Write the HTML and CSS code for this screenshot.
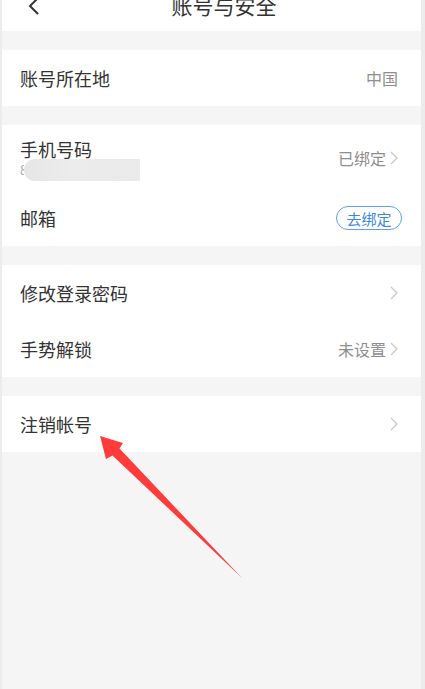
FILE: index.html
```html
<!doctype html>
<html>
	<head>
		<meta charset="utf-8">
		<title>账号与安全</title>
		<link rel="stylesheet" href="styles.css">
	</head>
	<body>
		<div class="page">
			<div class="header">
				<div class="headerInner">
					<a class="back">
						<svg width="14" height="18" viewBox="0 0 14 18"><polyline points="11,1 3,9 11,17" fill="none" stroke="#333" stroke-width="2"/></svg>
					</a>
					<span class="title">账号与安全</span>
					<span></span>
				</div>
			</div>

			<div class="group">
				<div class="row">
					<span class="label">账号所在地</span>
					<span class="value">中国</span>
				</div>
			</div>

			<div class="group">
				<div class="row phoneRow">
					<div class="phoneLeft">
						<span class="label">手机号码</span>
						<div class="phoneNum"><span class="digit">8</span><span class="blur"></span></div>
					</div>
					<span class="value">已绑定<i class="arrow"><svg width="8" height="14" viewBox="0 0 8 14"><polyline points="1,1 7,7 1,13" fill="none" stroke="#c8c8c8" stroke-width="1.3"/></svg></i></span>
				</div>
				<div class="row">
					<span class="label">邮箱</span>
					<a class="bindBtn">去绑定</a>
				</div>
			</div>

			<div class="group">
				<div class="row">
					<span class="label">修改登录密码</span>
					<span class="value"><i class="arrow"><svg width="8" height="14" viewBox="0 0 8 14"><polyline points="1,1 7,7 1,13" fill="none" stroke="#c8c8c8" stroke-width="1.3"/></svg></i></span>
				</div>
				<div class="row">
					<span class="label">手势解锁</span>
					<span class="value">未设置<i class="arrow"><svg width="8" height="14" viewBox="0 0 8 14"><polyline points="1,1 7,7 1,13" fill="none" stroke="#c8c8c8" stroke-width="1.3"/></svg></i></span>
				</div>
			</div>

			<div class="group">
				<div class="row">
					<span class="label">注销帐号</span>
					<span class="value"><i class="arrow"><svg width="8" height="14" viewBox="0 0 8 14"><polyline points="1,1 7,7 1,13" fill="none" stroke="#c8c8c8" stroke-width="1.3"/></svg></i></span>
				</div>
			</div>

			<!-- 标注箭头 -->
			<svg class="mark" width="425" height="689" viewBox="0 0 425 689">
				<polygon points="100,436 123,443 119.5,448.5 242,578 112.5,455.5 106,459" fill="#ff3b3b"/>
			</svg>
		</div>
	</body>
</html>
```

FILE: styles.css
```css
* {
	margin: 0px;
	padding: 0px;
}
body {
	background: #ececec;
	font-family: "Noto Sans CJK SC", "Noto Sans", sans-serif;
	color: #333;
}
a {
	text-decoration: none;
}
i {
	font-style: normal;
}
.page {
	position: relative;
	margin: 0 4px 0 2px;
	min-height: 689px;
	background: #f5f5f5;
	overflow: hidden;
}
.header {
	display: flow-root;
	height: 31px;
	background: white;
	margin-bottom: 19px;
}
.headerInner {
	display: grid;
	grid-template-columns: 1fr auto 1fr;
	align-items: center;
	height: 21px;
	margin-top: -5px;
	padding-left: 25px;
}
.back {
	display: flex;
	align-items: center;
}
.title {
	font-size: 21px;
	line-height: 21px;
	color: #333;
}
.group {
	background: white;
	margin-bottom: 19px;
}
.row {
	display: flex;
	align-items: center;
	justify-content: space-between;
	height: 56px;
	padding: 0 23px 0 18px;
}
.label {
	font-size: 18px;
	color: #333;
}
.value {
	display: flex;
	align-items: center;
	font-size: 16px;
	color: #8e8e8e;
}
.arrow {
	display: flex;
	margin-left: 4px;
}
.phoneRow {
	height: 65px;
	align-items: center;
}
.phoneLeft {
	display: flex;
	flex-direction: column;
	padding-top: 4px;
}
.phoneLeft .label {
	line-height: 20px;
}
.phoneNum {
	display: flex;
	align-items: center;
	height: 22px;
}
.digit {
	font-size: 13px;
	color: #aaa;
	width: 4px;
	overflow: hidden;
}
.blur {
	width: 116px;
	height: 22px;
	border-radius: 11px 0 0 11px;
	background: linear-gradient(to right, #e6e6e6, #ececec 40%, #eaeaea);
}
.bindBtn {
	display: flex;
	align-items: center;
	justify-content: center;
	width: 64px;
	height: 22px;
	border: 1.5px solid #5d9ff0;
	border-radius: 13px;
	color: #3d86e4;
	font-size: 15px;
	margin-right: -4px;
}
.mark {
	position: absolute;
	left: -2px;
	top: 0;
	pointer-events: none;
}
```
